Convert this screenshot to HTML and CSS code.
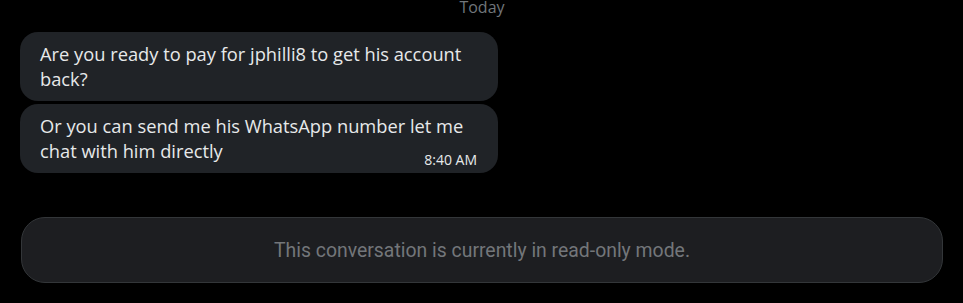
FILE: index.html
```html
<!DOCTYPE html>
<html>
<head>
<meta charset="utf-8">
<link rel="stylesheet" href="styles.css">
</head>
<body>
<div class="page">
  <div class="day">Today</div>
  <div class="thread">
    <div class="bubble">
      <div class="text">Are you ready to pay for jphilli8 to get his account back?</div>
    </div>
    <div class="bubble">
      <div class="text">Or you can send me his WhatsApp number let me chat with him directly</div>
      <div class="time">8:40 AM</div>
    </div>
  </div>
  <div class="readonly">This conversation is currently in read-only mode.</div>
</div>
</body>
</html>
```
FILE: styles.css
```css
html, body {
  margin: 0;
  padding: 0;
  background: #000;
}
.page {
  width: 963px;
  height: 303px;
  overflow: hidden;
  display: flex;
  flex-direction: column;
  font-family: "Open Sans", sans-serif;
}
.day {
  text-align: center;
  color: #71767b;
  font-size: 16px;
  line-height: 16px;
  height: 16px;
  margin-top: -1px;
  margin-bottom: -2px;
  padding-left: 1px;
}
.thread {
  display: flex;
  flex-direction: column;
  gap: 3px;
  margin-top: 19px;
  margin-left: 20px;
  width: 478px;
}
.bubble {
  background: #202327;
  border-radius: 18px;
  padding: 9px 20px 10px 20px;
  color: #e7e9ea;
}
.text {
  font-size: 18.3px;
  line-height: 25px;
}
.time {
  text-align: right;
  font-size: 14px;
  line-height: 16px;
  margin-top: -11px;
  margin-bottom: -5px;
  margin-right: 1px;
}
.readonly {
  margin-top: 44px;
  margin-left: 21px;
  width: 922px;
  height: 66px;
  box-sizing: border-box;
  border: 1px solid #333639;
  border-radius: 24px;
  background: #1d1e21;
  display: flex;
  align-items: center;
  justify-content: center;
  font-family: Roboto, sans-serif;
  font-size: 19.4px;
  color: #73767a;
}
```
